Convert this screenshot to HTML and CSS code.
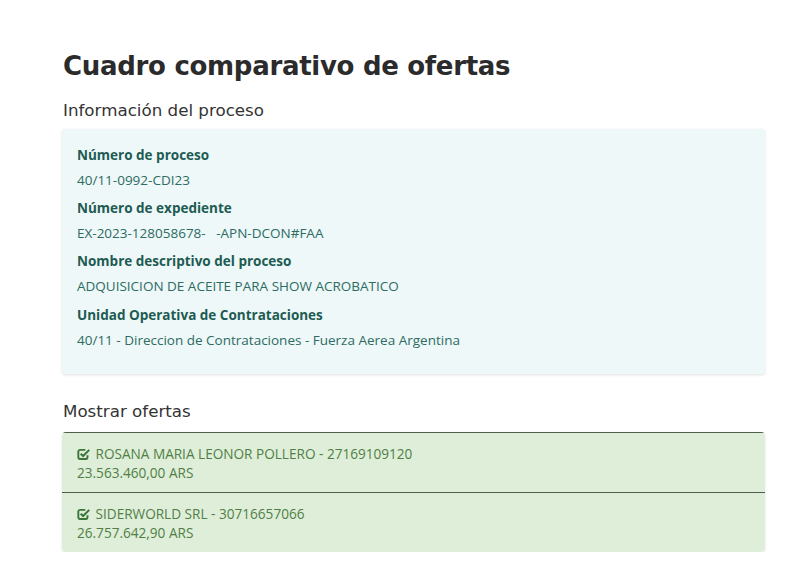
FILE: index.html
```html
<!DOCTYPE html>
<html lang="es">
<head>
<meta charset="utf-8">
<title>Cuadro comparativo de ofertas</title>
<link rel="stylesheet" href="styles.css">
</head>
<body>
<main class="page">
  <h1 class="title">Cuadro comparativo de ofertas</h1>
  <h2 class="section-title">Información del proceso</h2>
  <div class="info-box">
    <dl class="info-list">
      <dt>Número de proceso</dt>
      <dd>40/11-0992-CDI23</dd>
      <dt>Número de expediente</dt>
      <dd>EX-2023-128058678-&nbsp;&nbsp;&nbsp;-APN-DCON#FAA</dd>
      <dt>Nombre descriptivo del proceso</dt>
      <dd>ADQUISICION DE ACEITE PARA SHOW ACROBATICO</dd>
      <dt>Unidad Operativa de Contrataciones</dt>
      <dd>40/11 - Direccion de Contrataciones - Fuerza Aerea Argentina</dd>
    </dl>
  </div>
  <h2 class="section-title offers-title">Mostrar ofertas</h2>
  <ul class="offers">
    <li class="offer">
      <div class="offer-name"><svg class="check" viewBox="0 0 16 14" aria-hidden="true"><path d="M12 8.2v2.3a2 2 0 0 1-2 2H3.5a2 2 0 0 1-2-2V4a2 2 0 0 1 2-2h6" fill="none" stroke="currentColor" stroke-width="2.2"/><path d="M4.2 6.3 7 9l7-7" fill="none" stroke="currentColor" stroke-width="2.4"/></svg> ROSANA MARIA LEONOR POLLERO - 27169109120</div>
      <div class="offer-amount">23.563.460,00 ARS</div>
    </li>
    <li class="offer">
      <div class="offer-name"><svg class="check" viewBox="0 0 16 14" aria-hidden="true"><path d="M12 8.2v2.3a2 2 0 0 1-2 2H3.5a2 2 0 0 1-2-2V4a2 2 0 0 1 2-2h6" fill="none" stroke="currentColor" stroke-width="2.2"/><path d="M4.2 6.3 7 9l7-7" fill="none" stroke="currentColor" stroke-width="2.4"/></svg> SIDERWORLD SRL - 30716657066</div>
      <div class="offer-amount">26.757.642,90 ARS</div>
    </li>
  </ul>
</main>
</body>
</html>
```
FILE: styles.css
```css
html, body {
  margin: 0;
  padding: 0;
  background: #ffffff;
}
body {
  font-family: "Open Sans", "Liberation Sans", sans-serif;
  color: #333;
}
.page {
  width: 703px;
  margin-left: 62px;
  padding-top: 47px;
}
.title {
  font-family: "DejaVu Sans", sans-serif;
  font-weight: 700;
  font-size: 26px;
  line-height: 38px;
  margin: 0 0 0 1px;
  color: #2b2b2b;
  letter-spacing: -0.3px;
}
.section-title {
  font-family: "DejaVu Sans", sans-serif;
  font-weight: 400;
  font-size: 16.7px;
  line-height: 22px;
  margin: 14px 0 8px 1px;
  color: #333;
}
.info-box {
  background: #eef8f8;
  border-radius: 3px;
  box-shadow: 0 1px 3px rgba(0,0,0,0.12);
  padding: 15px 15px 19px;
  height: 211px;
}
.info-list {
  margin: 0;
}
.info-list dt {
  font-weight: 700;
  font-size: 13.5px;
  line-height: 22px;
  color: #1d5b53;
}
.info-list dd {
  margin: 3px 0 6.2px;
  font-size: 13.5px;
  line-height: 22px;
  color: #2d6b63;
}
.offers-title {
  margin-top: 26px;
  margin-bottom: 10px;
}
.offers {
  list-style: none;
  margin: 0;
  padding: 0;
  border-radius: 4px;
  box-shadow: 0 1px 3px rgba(0,0,0,0.1);
  overflow: hidden;
}
.offer {
  background: #dfeed8;
  border-top: 1px solid #4f5d4d;
  padding: 11px 15px 10px;
}
.offer-name, .offer-amount {
  font-size: 13.6px;
  line-height: 19px;
  color: #4f7f47;
}
.check {
  width: 14px;
  height: 12.5px;
  margin-right: 1px;
  color: #3c763d;
  vertical-align: -1px;
}
```
